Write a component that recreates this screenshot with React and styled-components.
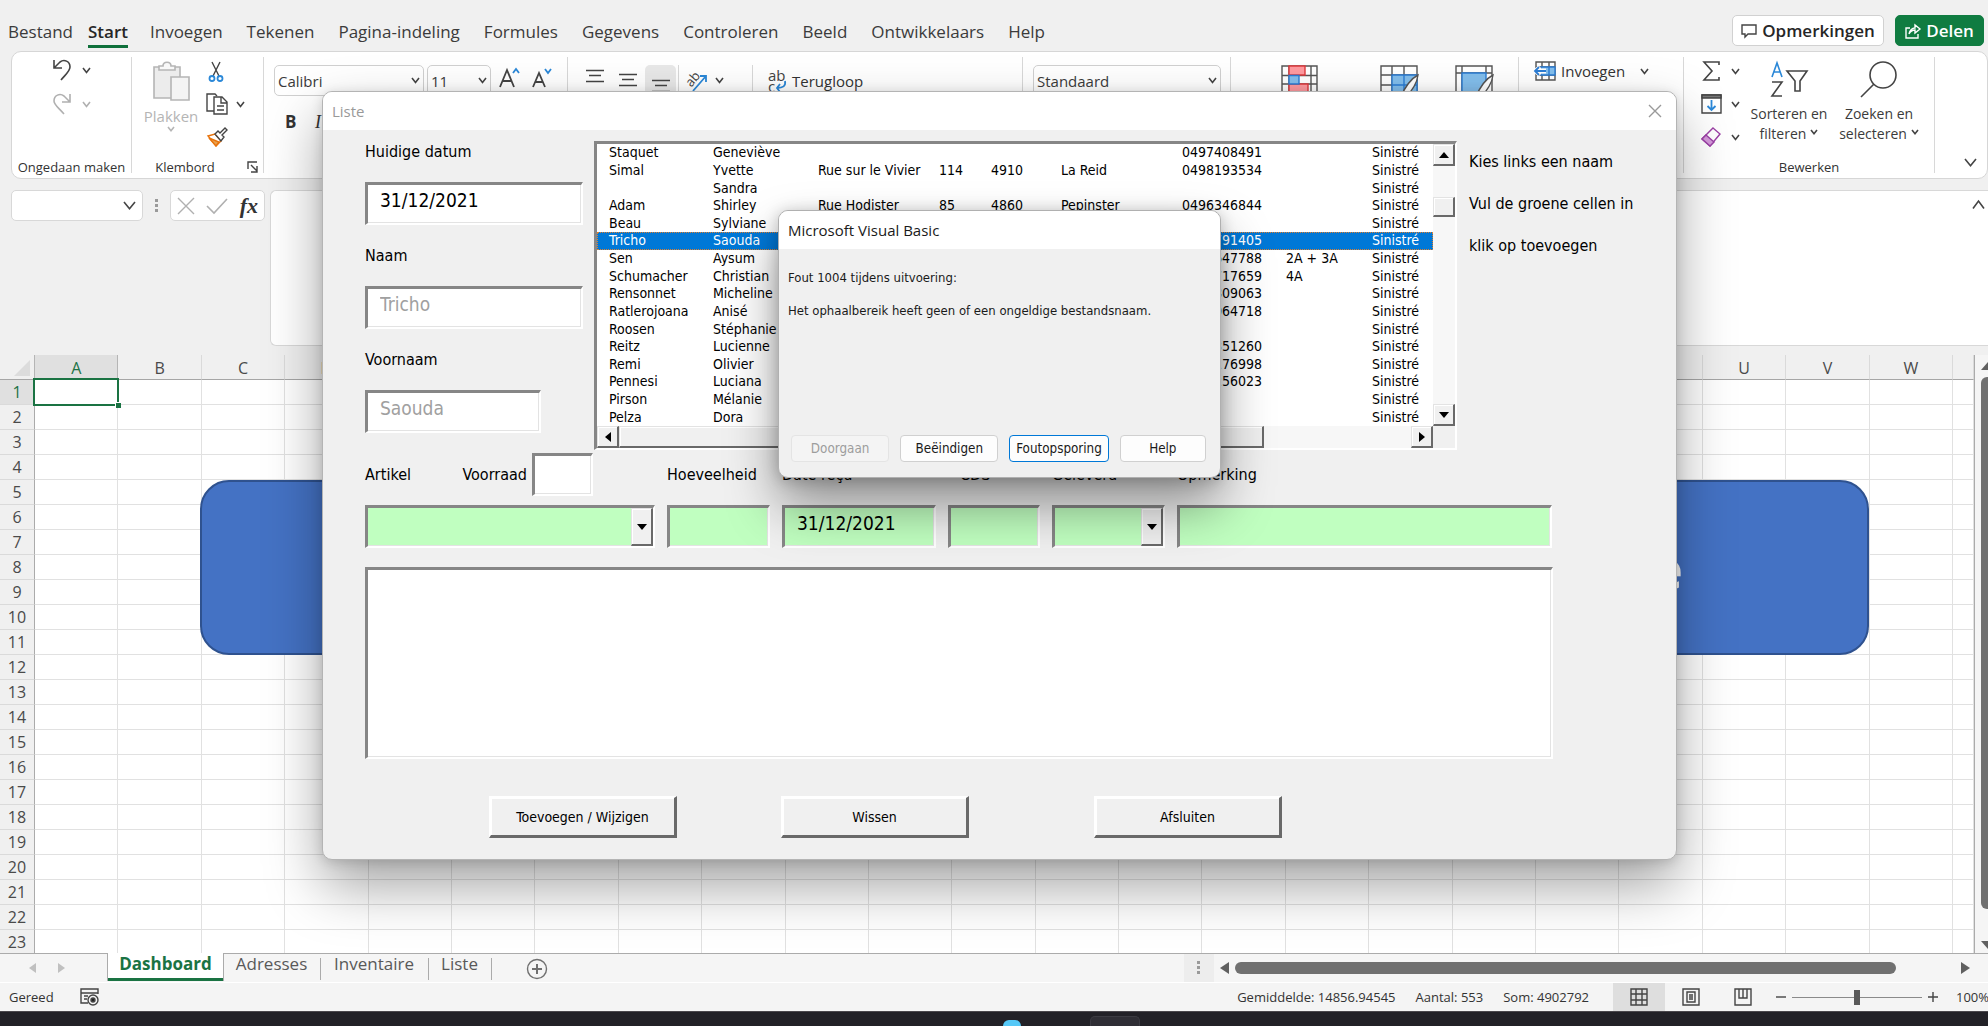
import React from 'react';
import styled, { createGlobalStyle, css } from 'styled-components';

const ui = '"Open Sans", "Noto Sans", sans-serif';
const form = '"DejaVu Sans Condensed", "DejaVu Sans", sans-serif';

const GlobalStyle = createGlobalStyle`
  *, *::before, *::after { box-sizing: border-box; }
  body { margin: 0; font-family: ${ui}; color: #333; background: #f0f0f0; }
  button, input, select, textarea { font-family: inherit; margin: 0; border-radius: 0; }
  button { padding: 0; border: 0; background: none; color: inherit; }
  svg { display: block; flex: none; overflow: visible; }
`;

const AppWindow = styled.div`
  position: relative;
  display: flex;
  flex-direction: column;
  height: 100vh;
  min-height: 900px;
  overflow: hidden;
  background: #f0f0f0;
`;

/* ---------- menu bar ---------- */
const MenuBar = styled.header`
  display: flex;
  justify-content: space-between;
  align-items: flex-start;
  height: 51px;
  padding: 15px 4px 0 8px;
`;
const Menu = styled.nav`
  display: flex;
  gap: 24px;
`;
const MenuItem = styled.button`
  height: 33px;
  padding-bottom: 1px;
  font-size: 17px;
  line-height: 31px;
  color: #3b3b3b;
  ${(p) => p.$active && css`
    font-weight: 600;
    color: #262626;
    margin: 0 -2px 0 -9px;
    box-shadow: inset 0 -3px #0f703b;
  `}
`;
const MenuActions = styled.div`
  display: flex;
  gap: 11px;
`;
const ActionButton = styled.button`
  display: flex;
  align-items: center;
  justify-content: center;
  gap: 5px;
  width: ${(p) => p.$width}px;
  height: 31px;
  border: 1px solid ${(p) => (p.$primary ? '#107c41' : '#d1d1d1')};
  border-radius: 5px;
  background: ${(p) => (p.$primary ? '#107c41' : '#fff')};
  color: ${(p) => (p.$primary ? '#fff' : '#262626')};
  font-size: 17px;
  font-weight: 600;
`;

/* ---------- ribbon ---------- */
const Ribbon = styled.section`
  display: flex;
  height: 128px;
  margin-left: 11px;
  padding: 5px 0;
  border: 1px solid #d6d6d6;
  border-radius: 10px;
  background: #fff;
`;
const Group = styled.div`
  display: flex;
  flex-direction: column;
  justify-content: space-between;
  flex: none;
  width: ${(p) => p.$width}px;
  border-right: 1px solid #d8d8d8;
`;
const GroupBody = styled.div`
  display: flex;
  align-items: flex-start;
  gap: ${(p) => p.$gap || 0}px;
  padding: ${(p) => p.$pad || '0'};
`;
const Stack = styled.div`
  display: flex;
  flex-direction: column;
  gap: ${(p) => p.$gap}px;
`;
const GroupLabel = styled.div`
  display: flex;
  justify-content: center;
  align-items: center;
  gap: 32px;
  padding-left: ${(p) => p.$indent || 0}px;
  font-size: 13px;
  line-height: 12px;
  white-space: nowrap;
`;
const IconButton = styled.button`
  display: flex;
  align-items: center;
  gap: ${(p) => p.$gap || 8}px;
  height: ${(p) => p.$height || 20}px;
  font-size: 15px;
  white-space: nowrap;
`;
const BigButton = styled.button`
  display: flex;
  flex-direction: column;
  align-items: center;
  width: ${(p) => p.$width}px;
  font-size: ${(p) => (p.$muted ? 15 : 14)}px;
  line-height: 20px;
  color: ${(p) => (p.$muted ? '#b5b5b5' : '#3b3b3b')};
  white-space: nowrap;
  svg:first-child { margin-bottom: 5px; }
`;
const InlineRow = styled.span`
  display: flex;
  align-items: center;
  gap: 4px;
`;
const PickerBox = styled.span`
  position: relative;
  width: ${(p) => p.$width}px;
  height: 31px;
  > svg { position: absolute; right: 4px; top: 12px; pointer-events: none; }
`;
const Picker = styled.select`
  appearance: none;
  width: 100%;
  height: 100%;
  padding: 0 3px;
  border: 1px solid #d0d0d0;
  border-radius: 5px;
  background: #fff;
  color: #3b3b3b;
  font-size: 15px;
`;
const Letter = styled.button`
  width: ${(p) => p.$width}px;
  font-family: ${(p) => (p.$italic ? '"Liberation Serif", serif' : ui)};
  font-style: ${(p) => (p.$italic ? 'italic' : 'normal')};
  font-size: ${(p) => (p.$italic ? 18 : 17)}px;
  line-height: 20px;
  font-weight: ${(p) => (p.$italic ? 400 : 700)};
  text-align: left;
`;
const AlignButton = styled.button`
  display: flex;
  justify-content: center;
  width: 31px;
  height: 30px;
  padding-top: ${(p) => p.$top}px;
  border-radius: 5px;
  background: ${(p) => (p.$active ? '#e8e8e8' : 'transparent')};
`;
const ShortRule = styled.span`
  width: 1px;
  height: 40px;
  background: #d8d8d8;
`;
const RibbonEnd = styled.div`
  display: flex;
  flex: 1;
  justify-content: flex-end;
  align-items: flex-end;
  padding: 0 10px 6px;
`;

/* ---------- formula bar ---------- */
const FormulaBar = styled.section`
  display: flex;
  align-items: flex-start;
  height: 156px;
  margin: 11px 0 9px 11px;
`;
const FieldBox = styled.div`
  display: flex;
  align-items: center;
  justify-content: space-between;
  width: ${(p) => p.$width}px;
  height: 31px;
  padding: 0 6px;
  border: 1px solid #d8d8d8;
  border-radius: 5px;
  background: #fff;
`;
const NameInput = styled.input`
  width: 90px;
  height: 27px;
  border: 0;
  font-size: 15px;
`;
const DotsHolder = styled.span`
  display: flex;
  justify-content: center;
  width: 27px;
  padding-top: 9px;
`;
const FxButton = styled.button`
  font-family: "Liberation Serif", serif;
  font-style: italic;
  font-size: 22px;
  line-height: 24px;
  font-weight: 700;
`;
const FormulaField = styled.div`
  display: flex;
  flex: 1;
  height: 156px;
  margin-left: 5px;
  padding: 0 3px 0 8px;
  border: 1px solid #d8d8d8;
  border-right: 0;
  border-radius: 6px 0 0 6px;
  background: #fff;
`;
const FormulaInput = styled.textarea`
  flex: 1;
  border: 0;
  resize: none;
  font-size: 15px;
  background: transparent;
`;
const CollapseButton = styled.button`
  height: 28px;
`;

/* ---------- sheet ---------- */
const SheetRow = styled.main`
  display: flex;
  flex: 1 1 0;
  min-height: 0;
  overflow: hidden;
`;
const SheetArea = styled.div`
  position: relative;
  flex: 1;
  overflow: hidden;
  border-right: 1px solid #ababab;
`;
const Grid = styled.table`
  width: 100%;
  table-layout: fixed;
  border-collapse: separate;
  border-spacing: 0;
  background: #fff;
`;
const Col = styled.col`
  width: ${(p) => p.$width}px;
`;
const ColumnHead = styled.th`
  height: 25px;
  padding: 2px 0 0;
  border-right: 1px solid ${(p) => (p.$active ? '#b5b5b5' : '#dadada')};
  border-bottom: 1px solid #a6a6a6;
  background: ${(p) => (p.$active ? '#e0e0e0' : '#f0f0f0')};
  color: ${(p) => (p.$active ? '#217346' : '#4a4a4a')};
  font-size: 16px;
  line-height: 20px;
  font-weight: 400;
`;
const Corner = styled.th`
  padding: 0 4px 3px 0;
  border-right: 1px solid #b5b5b5;
  border-bottom: 1px solid #a6a6a6;
  background: #f0f0f0;
  vertical-align: bottom;
  svg { margin-left: auto; }
`;
const RowHead = styled.th`
  height: 25px;
  padding: 0;
  border-right: 1px solid #ababab;
  border-bottom: 1px solid #dadada;
  background: ${(p) => (p.$active ? '#e0e0e0' : '#f0f0f0')};
  color: ${(p) => (p.$active ? '#217346' : '#4a4a4a')};
  font-size: 16px;
  line-height: 24px;
  font-weight: 400;
`;
const Cell = styled.td`
  padding: 0;
  border-right: 1px solid #e1e1e1;
  border-bottom: 1px solid #e1e1e1;
  ${(p) => p.$active && css`
    position: relative;
    &::before {
      content: '';
      position: absolute;
      inset: -2px;
      border: 2px solid #1a7343;
    }
    &::after {
      content: '';
      position: absolute;
      right: -4px;
      bottom: -4px;
      width: 6px;
      height: 6px;
      background: #1a7343;
      border: 1px solid #fff;
      border-width: 1px 0 0 1px;
    }
  `}
`;
const Banner = styled.div`
  position: absolute;
  top: 125px;
  left: 200px;
  right: 105px;
  height: 175px;
  display: flex;
  align-items: center;
  justify-content: flex-end;
  padding-right: 184px;
  border: 2px solid #2f528f;
  border-radius: 29px;
  background: #4472c4;
  color: #fff;
  font-size: 54px;
  font-weight: 700;
`;
const VerticalBar = styled.div`
  display: flex;
  flex-direction: column;
  align-items: flex-start;
  width: 13px;
  padding: 7px 0 4px 6px;
  gap: 7px;
  overflow: hidden;
  background: #f5f5f5;
`;
const VerticalThumb = styled.div`
  width: 12px;
  height: 532px;
  margin-bottom: auto;
  border-radius: 6px;
  background: #707070;
`;

/* ---------- tabs and status ---------- */
const TabBar = styled.div`
  display: flex;
  height: 30px;
  border-top: 1px solid #ababab;
  border-bottom: 1px solid #fff;
  background: #f5f5f5;
`;
const TabArrows = styled.div`
  display: flex;
  align-items: center;
  gap: 22px;
  width: 107px;
  padding-left: 29px;
`;
const TabList = styled.div`
  display: flex;
  align-items: flex-start;
`;
const Tab = styled.button`
  width: ${(p) => p.$width}px;
  height: 27px;
  font-size: 17px;
  line-height: 20px;
  padding: 0 2px 8px 0;
  color: #595959;
  ${(p) => p.$active && css`
    margin-top: -1px;
    height: 28px;
    padding: 0 0 7px;
    border: 1px solid #ababab;
    border-width: 0 1px;
    background: #fff;
    color: #1a7343;
    font-weight: 700;
    box-shadow: inset 0 -3px #1a7343;
  `}
  ${(p) => !p.$active && css`
    background: linear-gradient(#ababab, #ababab) right 4px / 1px 22px no-repeat;
    background-position: right 4px;
  `}
`;
const AddTab = styled.button`
  padding: 4px 34px 0;
  align-self: flex-start;
`;
const HorizontalBar = styled.div`
  display: flex;
  align-items: center;
  gap: 6px;
  width: 804px;
  margin-left: auto;
  padding-right: 18px;
`;
const Grip = styled.div`
  display: flex;
  align-items: center;
  justify-content: center;
  width: 30px;
  height: 100%;
  background: #ededed;
`;
const HorizontalThumb = styled.div`
  flex: 1;
  height: 12px;
  margin-right: 59px;
  border-radius: 6px;
  background: #707070;
`;
const StatusBar = styled.footer`
  display: flex;
  align-items: center;
  height: 28px;
  padding-left: 9px;
  background: #f4f4f4;
  font-size: 13px;
  white-space: nowrap;
  overflow: hidden;
`;
const StatusLeft = styled.div`
  display: flex;
  align-items: center;
  gap: 26px;
`;
const StatusStats = styled.div`
  display: flex;
  gap: 20px;
  margin: 0 24px 0 auto;
`;
const ViewButton = styled.button`
  display: flex;
  align-items: center;
  justify-content: center;
  width: 52px;
  height: 28px;
  background: ${(p) => (p.$active ? '#dedede' : 'transparent')};
`;
const Zoom = styled.div`
  display: flex;
  align-items: center;
  gap: 6px;
  margin-left: 7px;
`;
const ZoomSlider = styled.input`
  appearance: none;
  width: 130px;
  height: 20px;
  background: linear-gradient(#8a8a8a, #8a8a8a) center / 100% 1px no-repeat;
  &::-webkit-slider-thumb {
    appearance: none;
    width: 6px;
    height: 15px;
    background: #595959;
  }
`;
const ZoomValue = styled.span`
  width: 32px;
  margin-left: 12px;
  overflow: hidden;
`;
const Taskbar = styled.div`
  display: flex;
  justify-content: center;
  align-items: flex-end;
  gap: 69px;
  height: 15px;
  padding-left: 155px;
  border-top: 1px solid #4a474c;
  background: #222127;
  overflow: hidden;
`;
const TaskDot = styled.span`
  width: 18px;
  height: 6px;
  border-radius: 9px 9px 0 0;
  background: #55c8f7;
`;
const TaskTile = styled.span`
  width: 50px;
  height: 10px;
  border: 1px solid #3c3b42;
  border-bottom: 0;
  border-radius: 5px 5px 0 0;
  background: #2f2e35;
`;

/* ---------- user form window ---------- */
const FormWindow = styled.section`
  position: absolute;
  top: 91px;
  left: 322px;
  right: 311px;
  display: flex;
  flex-direction: column;
  border: 1px solid #b4b4b4;
  border-radius: 10px;
  background: #f0f0f0;
  color: #000;
  font-family: ${form};
  font-size: 16px;
  line-height: 21px;
  box-shadow: 0 26px 56px rgba(0, 0, 0, 0.36), 0 2px 12px rgba(0, 0, 0, 0.14);
`;
const TitleBar = styled.div`
  display: flex;
  justify-content: space-between;
  align-items: center;
  height: 38px;
  padding: 0 14px 0 9px;
  border-radius: 9px 9px 0 0;
  background: #fff;
  color: ${(p) => (p.$inactive ? '#999' : '#1a1a1a')};
  font-family: ${ui};
  font-size: 15px;
`;
const FormBody = styled.form`
  padding: 11px 0 21px 42px;
`;
const TopRow = styled.div`
  display: flex;
  height: 309px;
`;
const PersonFields = styled.div`
  display: flex;
  flex-direction: column;
  gap: 20px;
  width: 218px;
  margin-right: 11px;
`;
const bevel = css`
  border: solid;
  border-width: 3px 2px 2px 3px;
  border-color: #868686 #fff #fff #868686;
  box-shadow: inset -1px -1px #e3e3e3;
`;
const TextBox = styled.input`
  ${bevel}
  width: ${(p) => (p.$width ? p.$width + 'px' : '100%')};
  height: 43px;
  padding: 0 12px 9px;
  background: ${(p) => (p.$green ? '#c0ffc0' : '#fff')};
  color: #000;
  font-size: 19px;
  &:disabled { color: #a0a0a0; }
`;
const HelpNotes = styled.div`
  display: flex;
  flex-direction: column;
  gap: 21px;
  width: 219px;
  padding: 10px 0 0 12px;
  line-height: 21px;
`;
const ListBox = styled.div`
  ${bevel}
  display: grid;
  grid-template-columns: 1fr 22px;
  grid-template-rows: 1fr 22px;
  flex: 1;
  min-width: 0;
  background: #fff;
`;
const People = styled.table`
  width: 100%;
  height: 282px;
  table-layout: fixed;
  border-collapse: collapse;
  font-size: 14px;
  line-height: 17px;
  white-space: nowrap;
`;
const Person = styled.tr`
  ${(p) => p.$selected && css`
    background: #0078d7;
    color: #fff;
    outline: 1px dotted #e08030;
    outline-offset: -1px;
  `}
`;
const PersonCell = styled.td`
  padding: 0;
  &:first-child { padding-left: 12px; }
`;
const raised = css`
  border: solid;
  border-width: 1px 2px 2px 1px;
  border-color: #e3e3e3 #696969 #696969 #e3e3e3;
  background: #f0f0f0;
  box-shadow: inset 1px 1px #fff;
`;
const ScrollY = styled.div`
  display: flex;
  flex-direction: column;
  background: #f7f7f7;
`;
const ScrollX = styled.div`
  display: flex;
  background: #f7f7f7;
`;
const ScrollButton = styled.button`
  ${raised}
  display: flex;
  align-items: center;
  justify-content: center;
  width: 22px;
  height: 22px;
`;
const ThumbY = styled.div`
  ${raised}
  height: 20px;
  margin: 31px 0 auto;
`;
const ThumbX = styled.div`
  ${raised}
  flex: 646 1 0;
`;
const TrackX = styled.div`
  flex: 148 1 0;
`;
const ScrollCorner = styled.div`
  background: #f0f0f0;
`;
const EntryGrid = styled.div`
  display: grid;
  grid-template-columns: 290px 103px 154px 92px 113px 1fr;
  column-gap: 12px;
  row-gap: 9px;
  margin: 3px 124px 0 0;
`;
const EntryLabel = styled.label`
  align-self: center;
  padding-left: ${(p) => p.$indent || 0}px;
`;
const StockRow = styled.div`
  display: flex;
  align-items: center;
`;
const StockLabel = styled.label`
  margin: 0 5px 0 auto;
`;
const StockField = styled.div`
  width: 61px;
  margin-right: 62px;
`;
const ComboBox = styled.div`
  ${bevel}
  position: relative;
  height: 43px;
  background: #c0ffc0;
`;
const ComboSelect = styled.select`
  appearance: none;
  width: 100%;
  height: 100%;
  padding: 0 12px;
  border: 0;
  background: transparent;
  font-size: 19px;
`;
const ComboArrow = styled.span`
  ${raised}
  position: absolute;
  top: 0;
  right: 0;
  bottom: 0;
  display: flex;
  align-items: center;
  justify-content: center;
  width: 22px;
  pointer-events: none;
`;
const Memo = styled.textarea`
  ${bevel}
  display: block;
  width: calc(100% - 123px);
  height: 192px;
  margin-top: 19px;
  background: #fff;
  resize: none;
`;
const FormActions = styled.div`
  display: grid;
  grid-template-columns: 292px 313px 188px;
  margin: 37px 0 0 124px;
`;
const FormButton = styled.button`
  ${raised}
  width: 188px;
  height: 42px;
  border-width: 2px 3px 3px 2px;
  border-color: #fff #696969 #696969 #fff;
  font-size: 14px;
`;

/* ---------- error message ---------- */
const MessageWindow = styled.section`
  position: absolute;
  top: 210px;
  left: 778px;
  width: 443px;
  border: 1px solid #b0b0b0;
  border-radius: 10px;
  background: #f0f0f0;
  color: #1a1a1a;
  font-family: ${form};
  font-size: 13px;
  line-height: 17px;
  box-shadow: 0 28px 52px rgba(0, 0, 0, 0.4), 0 2px 16px rgba(0, 0, 0, 0.22);
`;
const MessageText = styled.div`
  display: flex;
  flex-direction: column;
  gap: 16px;
  height: 186px;
  padding: 20px 9px;
  p { margin: 0; }
`;
const MessageActions = styled.div`
  display: flex;
  gap: 11px;
  padding: 0 14px 15px 12px;
`;
const MessageButton = styled.button`
  flex: ${(p) => p.$grow} 1 0;
  height: 27px;
  border: 1px solid ${(p) => (p.$focus ? '#0078d7' : '#d0d0d0')};
  border-radius: 4px;
  background: #fdfdfd;
  &:disabled { background: #f4f4f4; color: #9d9d9d; border-color: #e4e4e4; }
`;

/* ---------- drawings ---------- */
const Svg = ({ w, h, children, ...rest }) => (
  <svg width={w} height={h} viewBox={`0 0 ${w} ${h}`} fill="none" stroke="#444" strokeWidth="1.4" aria-hidden="true" {...rest}>
    {children}
  </svg>
);
const Chevron = ({ size = 8, color = '#444', up }) => (
  <Svg w={size} h={Math.round(size * 0.75)} stroke={color} strokeWidth="1.6">
    <path d={up ? `M1 ${size * 0.65} L${size / 2} 1 L${size - 1} ${size * 0.65}` : `M1 1 L${size / 2} ${size * 0.6} L${size - 1} 1`} />
  </Svg>
);
const Triangle = ({ dir, color = '#000', w = 10, h = 6 }) => {
  const d = {
    up: `M0 ${h}L${w / 2} 0L${w} ${h}Z`,
    down: `M0 0L${w / 2} ${h}L${w} 0Z`,
    left: `M${w} 0L0 ${h / 2}L${w} ${h}Z`,
    right: `M0 0L${w} ${h / 2}L0 ${h}Z`,
  }[dir];
  return <Svg w={w} h={h} stroke="none" fill={color}><path d={d} /></Svg>;
};
const Dots = () => (
  <Svg w={4} h={14} stroke="none" fill="#9a9a9a">
    <path d="M0 0h3v3H0zM0 5h3v3H0zM0 10h3v3H0z" />
  </Svg>
);
const AlignLines = ({ color = '#444' }) => (
  <Svg w={20} h={14} stroke={color} strokeWidth="1.6"><path d="M1 1.5H19M4 6.5H16M1 12.5H19" /></Svg>
);
const Cross = ({ size = 14, color = '#777' }) => (
  <Svg w={size} h={size} stroke={color}><path d={`M1 1L${size - 1} ${size - 1}M${size - 1} 1L1 ${size - 1}`} /></Svg>
);
const CondFormat = () => (
  <Svg w={37} h={32} stroke="#555">
    <path fill="#fff" d="M1 1H36V31H1zM1 10.5H36M1 19H36M1 28H36M8 1V31M30 1V31" />
    <path fill="#ff9a9f" stroke="#e03a3e" d="M8 1H24V10H8zM8 19H27V30H8z" />
    <path fill="#83beec" stroke="#2b7cd3" d="M8 10.5H18V19H8z" />
  </Svg>
);
const FormatTable = () => (
  <Svg w={40} h={34} stroke="#555">
    <path fill="#fff" d="M1 1H37V31H1zM1 10H37M1 20H37M12 1V31M24 1V31" />
    <path fill="#83beec" stroke="#2b7cd3" d="M12 10H37V31H12z" />
    <path stroke="#2b7cd3" d="M12 20H37M24 10V31" />
    <path fill="#fff" d="M38 10C32 13 26 20 20 33H25C32 26 37 18 38 10Z" />
  </Svg>
);
const CellStyles = () => (
  <Svg w={40} h={34} stroke="#555">
    <path fill="#fff" d="M1 1H37V31H1zM1 8H37M7 1V31M31 1V8" />
    <path fill="#83beec" stroke="#2b7cd3" d="M7 8H31V31H7z" />
    <path fill="#fff" d="M38 10C32 13 26 20 20 33H25C32 26 37 18 38 10Z" />
  </Svg>
);

const letters = 'ABCDEFGHIJKLMNOPQRSTUVW'.split('');
const rowNumbers = Array.from({ length: 23 }, (_, i) => i + 1);
const menuItems = ['Bestand', 'Start', 'Invoegen', 'Tekenen', 'Pagina-indeling', 'Formules', 'Gegevens', 'Controleren', 'Beeld', 'Ontwikkelaars', 'Help'];
const people = [
  ['Staquet', 'Geneviève', '', '', '', '', '0497408491', ''],
  ['Simal', 'Yvette', 'Rue sur le Vivier', '114', '4910', 'La Reid', '0498193534', ''],
  ['', 'Sandra', '', '', '', '', '', ''],
  ['Adam', 'Shirley', 'Rue Hodister', '85', '4860', 'Pepinster', '0496346844', ''],
  ['Beau', 'Sylviane', '', '', '', '', '', ''],
  ['Tricho', 'Saouda', '', '', '', '', '0496791405', ''],
  ['Sen', 'Aysum', '', '', '', '', '0497647788', '2A + 3A'],
  ['Schumacher', 'Christian', '', '', '', '', '0498717659', '4A'],
  ['Rensonnet', 'Micheline', '', '', '', '', '0495809063', ''],
  ['Ratlerojoana', 'Anisé', '', '', '', '', '0497064718', ''],
  ['Roosen', 'Stéphanie', '', '', '', '', '', ''],
  ['Reitz', 'Lucienne', '', '', '', '', '0494351260', ''],
  ['Remi', 'Olivier', '', '', '', '', '0496176998', ''],
  ['Pennesi', 'Luciana', '', '', '', '', '0498256023', ''],
  ['Pirson', 'Mélanie', '', '', '', '', '', ''],
  ['Pelza', 'Dora', '', '', '', '', '', ''],
];
const peopleWidths = [116, 105, 121, 52, 70, 121, 104, 86];

function RibbonBar() {
  return (
    <Ribbon aria-label="Lint">
      <Group $width={120}>
        <GroupBody $pad="3px 0 0 40px">
          <Stack $gap={14}>
            <IconButton aria-label="Ongedaan maken" $gap={10}>
              <Svg w={20} h={22} strokeWidth="1.6"><path d="M2 1V9H10M2 9L8 3C12 0 18 2 18 8C18 12 14 15 9 21" /></Svg>
              <Chevron size={9} />
            </IconButton>
            <IconButton aria-label="Opnieuw" $gap={10}>
              <Svg w={20} h={22} stroke="#b0b0b0" strokeWidth="1.6"><path d="M18 1V9H10M18 9L12 3C8 0 2 2 2 8C2 12 7 15 12 21" /></Svg>
              <Chevron size={9} color="#b0b0b0" />
            </IconButton>
          </Stack>
        </GroupBody>
        <GroupLabel>Ongedaan maken</GroupLabel>
      </Group>

      <Group $width={132}>
        <GroupBody $pad="4px 0 0 8px" $gap={4}>
          <BigButton $muted $width={62}>
            <Svg w={38} h={40} stroke="#b5b5b5" strokeWidth="1.6">
              <path fill="#ececec" d="M2 6H28V37H2z" />
              <path fill="#f8f8f8" d="M7 9V5H11C11 0 19 0 19 5H23V9z" />
              <path fill="#f4f4f4" d="M19 16H37V39H19z" />
            </Svg>
            Plakken
            <Chevron color="#b5b5b5" />
          </BigButton>
          <Stack $gap={13}>
            <IconButton aria-label="Knippen">
              <Svg w={20} h={21}>
                <path d="M6 1L13 15M14 1L7 15" />
                <g stroke="#2b88d8" strokeWidth="1.8"><circle cx="6" cy="17.5" r="2.5" /><circle cx="14" cy="17.5" r="2.5" /></g>
              </Svg>
            </IconButton>
            <IconButton aria-label="Kopiëren" $gap={8}>
              <Svg w={22} h={22}>
                <path d="M8 18H1V1H9L11 3" />
                <path fill="#fff" d="M8 4H16L21 9V21H8zM15 4V10H21M11 13H18M11 17H18" />
              </Svg>
              <Chevron size={9} />
            </IconButton>
            <IconButton aria-label="Opmaak kopiëren">
              <Svg w={22} h={20}>
                <path fill="#fff" stroke="#e8730c" d="M2 9L9 7L15 14L10 19z" />
                <path fill="#e8a04c" stroke="#e8730c" d="M3 11L13 15L10 19z" />
                <path fill="#fff" d="M9 7L12 4L14 6L19 1L21 3L16 8L18 10L15 14z" />
              </Svg>
            </IconButton>
          </Stack>
        </GroupBody>
        <GroupLabel $indent={18}>
          Klembord
          <Svg w={11} h={12}><path d="M1 8V1H10M4 4L10 10M10 5V11H4" /></Svg>
        </GroupLabel>
      </Group>

      <Group $width={304}>
        <GroupBody $pad="8px 0 0 10px" $gap={3}>
          <PickerBox $width={150}>
            <Picker aria-label="Lettertype"><option>Calibri</option></Picker>
            <Chevron size={9} />
          </PickerBox>
          <PickerBox $width={64}>
            <Picker aria-label="Tekengrootte"><option>11</option></Picker>
            <Chevron size={9} />
          </PickerBox>
          <IconButton aria-label="Tekengrootte vergroten" $height={26}>
            <Svg w={32} h={22} strokeWidth="1.8"><path d="M6 20L13 3L20 20M8.500 14H17.500" /><path stroke="#2b88d8" d="M19 6L22 2L25 6" /></Svg>
          </IconButton>
          <IconButton aria-label="Tekengrootte verkleinen" $height={26}>
            <Svg w={26} h={22} strokeWidth="1.8"><path d="M4 20L10 6L16 20M6 15H14" /><path stroke="#2b88d8" d="M16 2L19 6L22 2" /></Svg>
          </IconButton>
        </GroupBody>
        <GroupBody $pad="0 0 41px 21px">
          <Letter $width={30}>B</Letter>
          <Letter $width={30} $italic>I</Letter>
        </GroupBody>
      </Group>

      <Group $width={455}>
        <GroupBody $pad="8px 0 0 11px" $gap={2}>
          <AlignButton aria-label="Boven uitlijnen" $top={4}><AlignLines /></AlignButton>
          <AlignButton aria-label="Midden uitlijnen" $top={8}><AlignLines /></AlignButton>
          <AlignButton aria-label="Onder uitlijnen" $active $top={14}><AlignLines /></AlignButton>
          <ShortRule />
          <IconButton aria-label="Afdrukstand" $height={30} $gap={6}>
            <Svg w={28} h={24} stroke="none" fill="#444">
              <text x="6" y="19" fontSize="13" fontFamily="Open Sans" transform="rotate(-50 9 15)">ab</text>
              <path stroke="#2b88d8" strokeWidth="1.8" fill="none" d="M12 23L25 8M19 8H25V14" />
            </Svg>
            <Chevron size={9} />
          </IconButton>
          <GroupBody $pad="0 12px 0 26px"><ShortRule /></GroupBody>
          <IconButton $height={32} $gap={5}>
            <Svg w={20} h={26} stroke="none" fill="#444">
              <text x="1" y="13" fontSize="15" fontFamily="Open Sans">ab</text>
              <text x="1" y="24" fontSize="15" fontFamily="Open Sans">c</text>
              <path stroke="#2b88d8" strokeWidth="1.8" fill="none" d="M18 13C19 18 16 20 10 20M13 16L10 20L13 24" />
            </Svg>
            Terugloop
          </IconButton>
        </GroupBody>
      </Group>

      <Group $width={208}>
        <GroupBody $pad="8px 0 0 10px">
          <PickerBox $width={188}>
            <Picker aria-label="Getalnotatie"><option>Standaard</option></Picker>
            <Chevron size={9} />
          </PickerBox>
        </GroupBody>
      </Group>

      <Group $width={288}>
        <GroupBody $pad="8px 0 0 50px">
          <BigButton $width={37} aria-label="Voorwaardelijke opmaak"><CondFormat /></BigButton>
          <GroupBody $pad="0 0 0 62px" $gap={35}>
            <BigButton $width={40} aria-label="Opmaken als tabel"><FormatTable /></BigButton>
            <BigButton $width={40} aria-label="Celstijlen"><CellStyles /></BigButton>
          </GroupBody>
        </GroupBody>
      </Group>

      <Group $width={165}>
        <GroupBody $pad="4px 0 0 15px">
          <IconButton $gap={5}>
            <Svg w={22} h={20} stroke="#555">
              <path fill="#fff" d="M2 1H21V19H2zM2 6H21M2 14H21M8 1V19M15 1V19" />
              <path fill="#83beec" stroke="#2b7cd3" d="M7 6H21V14H7zM15 6V14" />
              <path stroke="#fff" strokeWidth="5" d="M12 10H2M6 6L2 10L6 14" />
              <path stroke="#2b7cd3" strokeWidth="1.8" d="M12 10H1M5 6L1 10L5 14" />
            </Svg>
            Invoegen
            <GroupBody $pad="0 0 0 10px"><Chevron size={9} /></GroupBody>
          </IconButton>
        </GroupBody>
      </Group>

      <Group $width={251}>
        <GroupBody $pad="4px 0 0 17px" $gap={8}>
          <Stack $gap={13}>
            <IconButton aria-label="AutoSom" $gap={8}>
              <Svg w={22} h={20} strokeWidth="1.6"><path d="M18 4V1H3L11 10L3 19H18V16" /></Svg>
              <Chevron size={9} />
            </IconButton>
            <IconButton aria-label="Doorvoeren" $gap={8}>
              <Svg w={22} h={20}>
                <path d="M1 1H20V19H1z" /><path fill="#777" d="M1 1H20V4H1z" />
                <path stroke="#2b88d8" strokeWidth="1.8" d="M10.5 6V16M6.5 12L10.5 16L14.5 12" />
              </Svg>
              <Chevron size={9} />
            </IconButton>
            <IconButton aria-label="Wissen" $gap={8}>
              <Svg w={22} h={20} stroke="#9b3fa5">
                <path fill="#fff" d="M12 1L19 7L9 19L1 12z" /><path fill="#d59adb" d="M5 8L13 15L9 19L1 12z" />
              </Svg>
              <Chevron size={9} />
            </IconButton>
          </Stack>
          <GroupBody $gap={6}>
            <BigButton $width={82}>
              <Svg w={38} h={38} strokeWidth="1.6">
                <path stroke="#2b88d8" d="M2 16L7 2L12 16M4 11H10" />
                <path d="M2 21H12L2 35H12M17 10H37L30 20V30H25V20z" />
              </Svg>
              <span>Sorteren en</span>
              <InlineRow>filteren <Chevron /></InlineRow>
            </BigButton>
            <BigButton $width={86}>
              <Svg w={40} h={38} strokeWidth="1.6"><circle cx="24" cy="14" r="13" /><path d="M15 23L2 36" /></Svg>
              <span>Zoeken en</span>
              <InlineRow>selecteren <Chevron /></InlineRow>
            </BigButton>
          </GroupBody>
        </GroupBody>
        <GroupLabel>Bewerken</GroupLabel>
      </Group>
      <RibbonEnd>
        <IconButton aria-label="Lint samenvouwen" $height={9}><Chevron size={13} /></IconButton>
      </RibbonEnd>
    </Ribbon>
  );
}

function Sheet() {
  return (
    <SheetRow>
      <SheetArea>
        <Grid>
          <colgroup>
            <Col $width={35} />
            {letters.map((l) => <col key={l} />)}
            <Col $width={21} />
          </colgroup>
          <thead>
            <tr>
              <Corner aria-label="Alles selecteren">
                <Svg w={16} h={16} stroke="none" fill="#dcdcdc"><path d="M16 0V16H0z" /></Svg>
              </Corner>
              {letters.map((l, i) => <ColumnHead key={l} $active={i === 0}>{l}</ColumnHead>)}
              <ColumnHead />
            </tr>
          </thead>
          <tbody>
            {rowNumbers.map((n) => (
              <tr key={n}>
                <RowHead $active={n === 1}>{n}</RowHead>
                {letters.map((l, i) => <Cell key={l} $active={n === 1 && i === 0} />)}
                <Cell />
              </tr>
            ))}
          </tbody>
        </Grid>
        <Banner>e</Banner>
      </SheetArea>
      <VerticalBar>
        <Triangle dir="up" color="#606060" w={14} h={8} />
        <VerticalThumb />
        <Triangle dir="down" color="#606060" w={14} h={8} />
      </VerticalBar>
    </SheetRow>
  );
}

function SheetTabs() {
  return (
    <TabBar>
      <TabArrows>
        <Triangle dir="left" color="#c0c0c0" w={7} h={10} />
        <Triangle dir="right" color="#c0c0c0" w={7} h={10} />
      </TabArrows>
      <TabList>
        <Tab $active $width={117}>Dashboard</Tab>
        <Tab $width={97}>Adresses</Tab>
        <Tab $width={108}>Inventaire</Tab>
        <Tab $width={63}>Liste</Tab>
      </TabList>
      <AddTab aria-label="Nieuw blad">
        <Svg w={22} h={22} stroke="#707070"><circle cx="11" cy="11" r="9.5" /><path strokeWidth="2" d="M11 6V16M6 11H16" /></Svg>
      </AddTab>
      <HorizontalBar>
        <Grip><Dots /></Grip>
        <Triangle dir="left" color="#606060" w={9} h={12} />
        <HorizontalThumb />
        <Triangle dir="right" color="#606060" w={9} h={12} />
      </HorizontalBar>
    </TabBar>
  );
}

function Status() {
  return (
    <StatusBar>
      <StatusLeft>
        <span>Gereed</span>
        <Svg w={20} h={18}>
          <path d="M8 15H1V1H18V6M1 5H18M4 8H8M4 11H7" /><circle cx="13" cy="12" r="5" /><circle cx="13" cy="12" r="2" fill="#222" />
        </Svg>
      </StatusLeft>
      <StatusStats>
        <span>Gemiddelde: 14856.94545</span>
        <span>Aantal: 553</span>
        <span>Som: 4902792</span>
      </StatusStats>
      <ViewButton $active aria-label="Normaal">
        <Svg w={18} h={18}><path d="M1 1H17V17H1zM1 6H17M1 12H17M6 1V17M12 1V17" /></Svg>
      </ViewButton>
      <ViewButton aria-label="Pagina-indeling">
        <Svg w={18} h={18}><path d="M1 1H17V17H1zM5 4H13V14H5zM7 7H11M7 9H11M7 11H11" /></Svg>
      </ViewButton>
      <ViewButton aria-label="Pagina-eindevoorbeeld">
        <Svg w={18} h={18}><path d="M1 1H17V17H1zM5 1V10H13V1M9 1V10" /></Svg>
      </ViewButton>
      <Zoom>
        <IconButton aria-label="Uitzoomen"><Svg w={10} h={10}><path d="M0 5H10" /></Svg></IconButton>
        <ZoomSlider type="range" min="0" max="100" defaultValue="50" aria-label="Zoomen" />
        <IconButton aria-label="Inzoomen"><Svg w={10} h={10}><path d="M0 5H10M5 0V10" /></Svg></IconButton>
        <ZoomValue>100%</ZoomValue>
      </Zoom>
    </StatusBar>
  );
}

function PeopleList() {
  return (
    <ListBox>
      <People aria-label="Personen">
        <colgroup>
          {peopleWidths.map((w, i) => <Col key={i} $width={w} />)}
          <col />
        </colgroup>
        <tbody>
          {people.map((row, i) => (
            <Person key={i} $selected={row[0] === 'Tricho'}>
              {row.map((text, c) => <PersonCell key={c}>{text}</PersonCell>)}
              <PersonCell>Sinistré</PersonCell>
            </Person>
          ))}
        </tbody>
      </People>
      <ScrollY>
        <ScrollButton type="button" aria-label="Omhoog"><Triangle dir="up" /></ScrollButton>
        <ThumbY />
        <ScrollButton type="button" aria-label="Omlaag"><Triangle dir="down" /></ScrollButton>
      </ScrollY>
      <ScrollX>
        <ScrollButton type="button" aria-label="Naar links"><Triangle dir="left" w={6} h={10} /></ScrollButton>
        <ThumbX />
        <TrackX />
        <ScrollButton type="button" aria-label="Naar rechts"><Triangle dir="right" w={6} h={10} /></ScrollButton>
      </ScrollX>
      <ScrollCorner />
    </ListBox>
  );
}

function Combo({ id, label }) {
  return (
    <ComboBox>
      <ComboSelect id={id} aria-label={label}><option value="" /></ComboSelect>
      <ComboArrow><Triangle dir="down" /></ComboArrow>
    </ComboBox>
  );
}

function ListeForm() {
  return (
    <FormWindow aria-label="Liste">
      <TitleBar $inactive>
        Liste
        <button type="button" aria-label="Sluiten"><Cross color="#999" /></button>
      </TitleBar>
      <FormBody onSubmit={(e) => e.preventDefault()}>
        <TopRow>
          <PersonFields>
            <label htmlFor="datum">Huidige datum</label>
            <TextBox id="datum" defaultValue="31/12/2021" />
            <label htmlFor="naam">Naam</label>
            <TextBox id="naam" defaultValue="Tricho" disabled />
            <label htmlFor="voornaam">Voornaam</label>
            <TextBox id="voornaam" defaultValue="Saouda" disabled $width={176} />
          </PersonFields>
          <PeopleList />
          <HelpNotes>
            <span>Kies links een naam</span>
            <span>Vul de groene cellen in</span>
            <span>klik op toevoegen</span>
          </HelpNotes>
        </TopRow>
        <EntryGrid>
          <StockRow>
            <label htmlFor="artikel">Artikel</label>
            <StockLabel htmlFor="voorraad">Voorraad</StockLabel>
            <StockField><TextBox id="voorraad" /></StockField>
          </StockRow>
          <EntryLabel htmlFor="hoeveelheid">Hoeveelheid</EntryLabel>
          <EntryLabel htmlFor="recu">Date reçu</EntryLabel>
          <EntryLabel htmlFor="cds" $indent={12}>CDS</EntryLabel>
          <EntryLabel htmlFor="geleverd">Geleverd</EntryLabel>
          <EntryLabel htmlFor="opmerking">Opmerking</EntryLabel>
          <Combo id="artikel" label="Artikel" />
          <TextBox id="hoeveelheid" $green />
          <TextBox id="recu" $green defaultValue="31/12/2021" />
          <TextBox id="cds" $green />
          <Combo id="geleverd" label="Geleverd" />
          <TextBox id="opmerking" $green />
        </EntryGrid>
        <Memo aria-label="Overzicht" />
        <FormActions>
          <FormButton type="submit">Toevoegen / Wijzigen</FormButton>
          <FormButton type="button">Wissen</FormButton>
          <FormButton type="button">Afsluiten</FormButton>
        </FormActions>
      </FormBody>
    </FormWindow>
  );
}

function ErrorMessage() {
  return (
    <MessageWindow role="alertdialog" aria-label="Microsoft Visual Basic">
      <TitleBar>Microsoft Visual Basic</TitleBar>
      <MessageText>
        <p>Fout 1004 tijdens uitvoering:</p>
        <p>Het ophaalbereik heeft geen of een ongeldige bestandsnaam.</p>
      </MessageText>
      <MessageActions>
        <MessageButton $grow={98} disabled>Doorgaan</MessageButton>
        <MessageButton $grow={98}>Beëindigen</MessageButton>
        <MessageButton $grow={99} $focus>Foutopsporing</MessageButton>
        <MessageButton $grow={86}>Help</MessageButton>
      </MessageActions>
    </MessageWindow>
  );
}

export default function App() {
  return (
    <>
      <GlobalStyle />
      <AppWindow>
        <MenuBar>
          <Menu>
            {menuItems.map((item) => <MenuItem key={item} $active={item === 'Start'}>{item}</MenuItem>)}
          </Menu>
          <MenuActions>
            <ActionButton $width={152}>
              <Svg w={16} h={16}><path d="M1 2H15V11H7L4 14V11H1z" /></Svg>
              Opmerkingen
            </ActionButton>
            <ActionButton $primary $width={89}>
              <Svg w={16} h={16} stroke="#fff"><path d="M5 5H1V15H13V11M4 11C5 7 7 5 10 5V2L15 6L10 10V7C7 7 5 9 4 11Z" /></Svg>
              Delen
            </ActionButton>
          </MenuActions>
        </MenuBar>
        <RibbonBar />
        <FormulaBar>
          <FieldBox $width={132}>
            <NameInput aria-label="Naamvak" />
            <Chevron size={13} />
          </FieldBox>
          <DotsHolder><Dots /></DotsHolder>
          <FieldBox $width={95}>
            <button aria-label="Annuleren"><Cross size={18} color="#b0b0b0" /></button>
            <button aria-label="Invoeren"><Svg w={22} h={16} stroke="#b0b0b0" strokeWidth="1.6"><path d="M1 8L8 15L21 1" /></Svg></button>
            <FxButton>fx</FxButton>
          </FieldBox>
          <FormulaField>
            <FormulaInput aria-label="Formulebalk" />
            <CollapseButton aria-label="Formulebalk samenvouwen"><Chevron size={13} up /></CollapseButton>
          </FormulaField>
        </FormulaBar>
        <Sheet />
        <SheetTabs />
        <Status />
        <Taskbar>
          <TaskDot />
          <TaskTile />
        </Taskbar>
        <ListeForm />
        <ErrorMessage />
      </AppWindow>
    </>
  );
}
